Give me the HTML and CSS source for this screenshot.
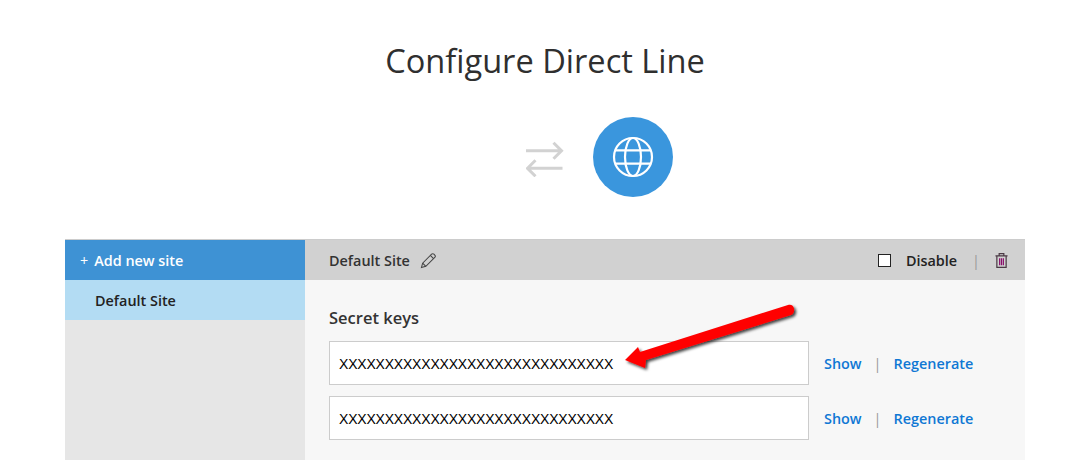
FILE: index.html
```html
<!DOCTYPE html>
<html lang="en">
<head>
    <meta charset="UTF-8">
    <title>Configure Direct Line</title>
    <link rel="stylesheet" href="styles.css">
</head>
<body>
    <h1 class="title">Configure Direct Line</h1>
    <div class="channel-icons">
        <svg class="swap-icon" width="38" height="40" viewBox="0 0 38 40" fill="none" stroke="#d2d2d2" stroke-width="3">
            <path d="M0 13.700H35M27.500 5.700L35.500 13.700L27.500 21.700"/>
            <path d="M36.500 31.300H1.500M9.500 23.300L1.500 31.300L9.500 39.300"/>
        </svg>
        <div class="globe-circle">
            <svg width="42" height="42" viewBox="0 0 42 42" fill="none" stroke="#fff" stroke-width="2.200">
                <circle cx="21" cy="21" r="19"/>
                <ellipse cx="21" cy="21" rx="8" ry="19"/>
                <path d="M3.200 14.300H38.800M3.200 27.700H38.800"/>
            </svg>
        </div>
    </div>
    <div class="panel">
        <div class="sidebar">
            <div class="add-site"><span class="plus">+</span>Add new site</div>
            <div class="site-item">Default Site</div>
        </div>
        <div class="main">
            <div class="main-header">
                <span class="site-name">Default Site</span>
                <svg class="pencil" width="16" height="16" viewBox="0 0 17 17" fill="none" stroke="#444" stroke-width="1.100">
                    <path d="M1.500 15.500L2.800 10.800L12.300 1.300C13 .6 14.100 .6 14.800 1.300L15.700 2.200C16.400 2.900 16.400 4 15.700 4.700L6.200 14.200Z"/>
                    <path d="M2.800 10.800L6.200 14.200M11 2.600L14.400 6"/>
                </svg>
                <div class="header-actions">
                    <span class="checkbox"></span>
                    <span class="disable-label">Disable</span>
                    <span class="sep">|</span>
                    <svg class="trash" width="13" height="17" viewBox="0 0 14 17" fill="none" stroke="#4a3a44" stroke-width="1.300">
                        <path d="M.5 3.500H13.500M4.500 3.500V1H9.500V3.500M2 3.500V16H12V3.500"/>
                        <path d="M5 6V13.500M7 6V13.500M9 6V13.500" stroke="#8a0f6c"/>
                    </svg>
                </div>
            </div>
            <div class="main-body">
                <h2 class="keys-title">Secret keys</h2>
                <div class="key-row">
                    <div class="key-input">XXXXXXXXXXXXXXXXXXXXXXXXXXXXXX</div>
                    <a class="key-link">Show</a>
                    <span class="sep">|</span>
                    <a class="key-link">Regenerate</a>
                </div>
                <div class="key-row">
                    <div class="key-input">XXXXXXXXXXXXXXXXXXXXXXXXXXXXXX</div>
                    <a class="key-link">Show</a>
                    <span class="sep">|</span>
                    <a class="key-link">Regenerate</a>
                </div>
            </div>
        </div>
    </div>
    <!-- red annotation arrow sits over the page -->
    <svg class="arrow" width="190" height="80" viewBox="0 0 190 80">
        <defs>
            <filter id="arrowShadow" x="-10%" y="-20%" width="130%" height="150%">
                <feDropShadow dx="2" dy="2" stdDeviation="1.500" flood-color="#000" flood-opacity="0.750"/>
            </filter>
        </defs>
        <path filter="url(#arrowShadow)" fill="#ff0000" d="M168 5C171 4 173.500 5.500 174 8.500C174.500 11.500 173.500 14 171 15L26 60L25 68L5 60L18 47L20 52Z"/>
    </svg>
</body>
</html>
```

FILE: styles.css
```css
html, body {
    height: 100%;
}
body {
    margin: 0;
    background-color: #fff;
    font-family: "Open Sans", "Noto Sans", sans-serif;
    font-size: 14.4px;
    color: #333;
    overflow: hidden;
    position: relative;
}
.title {
    margin: 0;
    padding-top: 40px;
    height: 77px;
    text-align: center;
    font-size: 32.6px;
    line-height: 42px;
    font-weight: 400;
    color: #2f2f2f;
}
.channel-icons {
    display: flex;
    justify-content: center;
    align-items: center;
    gap: 29px;
    height: 80px;
    padding-left: 109px;
}
.globe-circle {
    width: 80px;
    height: 80px;
    border-radius: 50%;
    background-color: #3a96dd;
    display: flex;
    justify-content: center;
    align-items: center;
}
.panel {
    display: flex;
    margin: 42px 65px 0;
    height: 220px;
    border-top: 1px solid #ccc;
}
.sidebar {
    width: 240px;
    background-color: #e6e6e6;
}
.add-site {
    height: 40px;
    line-height: 41px;
    padding-left: 15px;
    background-color: #3e92d4;
    color: #fff;
    font-weight: 600;
}
.plus {
    font-weight: 400;
    margin-right: 6px;
}
.site-item {
    height: 40px;
    line-height: 42px;
    padding-left: 30px;
    background-color: #b3dcf3;
    color: #222;
    font-weight: 600;
}
.main {
    flex: 1;
    background-color: #f7f7f7;
}
.main-header {
    display: flex;
    align-items: center;
    height: 40px;
    padding: 1px 17px 0 24px;
    box-sizing: border-box;
    background-color: #d1d1d1;
    font-weight: 600;
    color: #333;
}
.pencil {
    margin-left: 10px;
}
.header-actions {
    margin-left: auto;
    display: flex;
    align-items: center;
}
.checkbox {
    width: 11px;
    height: 11px;
    border: 1px solid #222;
    background-color: #fff;
    margin-right: 15px;
}
.disable-label {
    color: #222;
}
.header-actions .sep {
    margin: 0 15px;
}
.sep {
    color: #999;
    font-weight: 400;
}
.main-body {
    padding: 26px 24px 0;
}
.keys-title {
    margin: 0 0 11px;
    font-size: 16.500px;
    line-height: 24px;
    font-weight: 600;
    color: #333;
}
.key-row {
    display: flex;
    align-items: center;
    margin-bottom: 11px;
}
.key-input {
    width: 469px;
    height: 42px;
    line-height: 44px;
    padding-left: 9px;
    border: 1px solid #ccc;
    background-color: #fff;
    font-family: "Liberation Sans", Arial, sans-serif;
    font-size: 14px;
    letter-spacing: -.2px;
    color: #000;
    margin-right: 15px;
}
.key-link {
    color: #0f78d4;
    font-weight: 600;
}
.key-row .sep {
    margin: 0 12px;
}
.arrow {
    position: absolute;
    left: 620px;
    top: 300px;
}
```
